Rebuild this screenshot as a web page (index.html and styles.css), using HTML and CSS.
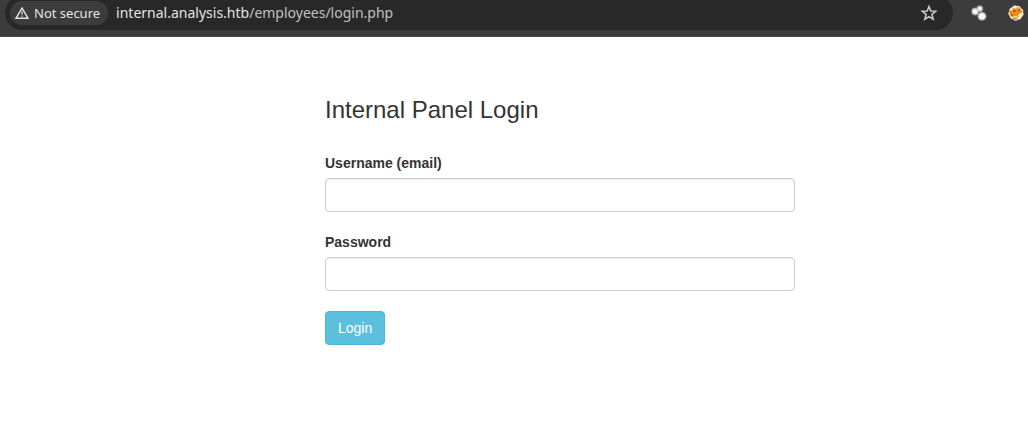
FILE: index.html
```html
<!DOCTYPE html>
<html lang="en">
<head>
<meta charset="utf-8">
<meta name="viewport" content="width=device-width, initial-scale=1">
<title>Internal Panel Login</title>
<link rel="stylesheet" href="styles.css">
</head>
<body>
<header class="toolbar">
  <div class="address-bar">
    <button class="security-chip" type="button">
      <svg width="14" height="12" viewBox="0 0 14 12" aria-hidden="true">
        <path d="M7 1.2 L13 11.2 H1 Z" fill="none" stroke="#e3e3e3" stroke-width="1.5"/>
        <path d="M7 4.5 V7.6 M7 8.4 V9.8" stroke="#e3e3e3" stroke-width="1.3"/>
      </svg>
      <span>Not secure</span>
    </button>
    <div class="url"><span class="url-host">internal.analysis.htb</span>/employees/login.php</div>
    <button class="icon-button" type="button" aria-label="Bookmark this page">
      <svg width="16" height="16" viewBox="0 0 16 16" aria-hidden="true">
        <path d="M8 1.5 L9.8 6 L14.7 6.3 L10.9 9.4 L12.2 14.2 L8 11.6 L3.8 14.2 L5.1 9.4 L1.3 6.3 L6.2 6 Z" fill="none" stroke="#c7c7c7" stroke-width="1.6"/>
      </svg>
    </button>
  </div>
  <div class="extensions">
    <button class="icon-button" type="button" aria-label="Extension">
      <svg width="16" height="16" viewBox="0 0 16 16" aria-hidden="true">
        <g fill="#8f8f8f"><circle cx="4.2" cy="6.5" r="4"/><circle cx="8.8" cy="3.7" r="3.4"/><circle cx="11" cy="11.3" r="4.6"/></g>
        <g fill="#c9c9c9"><circle cx="4.2" cy="6.5" r="3.2"/><circle cx="8.8" cy="3.7" r="2.6"/><circle cx="11" cy="11.3" r="3.8"/></g>
        <g fill="#fafafa"><circle cx="4.2" cy="6.5" r="2.2"/><circle cx="8.8" cy="3.7" r="1.7"/><circle cx="11" cy="11.3" r="2.8"/></g>
      </svg>
    </button>
    <button class="icon-button" type="button" aria-label="Proxy extension">
      <svg width="16" height="16" viewBox="0 0 16 16" aria-hidden="true">
        <circle cx="8" cy="8" r="7.2" fill="#eee3d0"/>
        <path d="M1 7 L2 5 L4 6 L5 3 L8 4 L10 2 L13 4 L14 7 L13 10 L10 12 L7 11 L4 12 L2 10 Z" fill="#f08d15"/>
        <path d="M4 13 L7 12.5 L10 13.5 L8 15 H6 Z" fill="#e98814"/>
        <path d="M5 7 L7 5.5 L8 7 M3 9.5 L5 10.5 M10 6 L12 5" fill="none" stroke="#8a4708" stroke-width="1"/>
        <path d="M10 10 L13 8 L14 10 L11 12 Z" fill="#fff"/>
        <circle cx="8" cy="8" r="7.1" fill="none" stroke="#f6eee0" stroke-width="1" stroke-dasharray="3 2"/>
      </svg>
    </button>
  </div>
</header>
<main class="page">
  <form class="login">
    <h1 class="title">Internal Panel Login</h1>
    <div class="field">
      <label class="label" for="username">Username (email)</label>
      <input class="input" id="username" name="username" type="text">
    </div>
    <div class="field">
      <label class="label" for="password">Password</label>
      <input class="input" id="password" name="password" type="password">
    </div>
    <button class="submit" type="submit">Login</button>
  </form>
</main>
</body>
</html>
```
FILE: styles.css
```css
* {
  box-sizing: border-box;
}

body {
  margin: 0;
  background: #fff;
  color: #333;
  font: 14px/20px "Liberation Sans", Arial, sans-serif;
}

button {
  border: 0;
  font: inherit;
  cursor: pointer;
}

.toolbar {
  display: flex;
  align-items: flex-start;
  gap: 18px;
  height: 37px;
  padding: 0 4px 0 5px;
  overflow: hidden;
  background: #3c3c3c;
  border-bottom: 1px solid #484848;
}

.address-bar {
  display: flex;
  flex: 1;
  align-items: center;
  gap: 8px;
  height: 34px;
  margin-top: -4px;
  padding: 0 16px 0 5px;
  background: #282828;
  border-radius: 17px;
}

.security-chip {
  display: flex;
  align-items: center;
  gap: 5px;
  height: 24px;
  padding: 0 8px 0 5px;
  border-radius: 12px;
  background: #3c3c3c;
  color: #e3e3e3;
  font: 400 13px/20px "Noto Sans", sans-serif;
  white-space: nowrap;
}

.url {
  flex: 1;
  color: #c0c0c0;
  font: 14px/20px "Noto Sans", sans-serif;
}

.url-host {
  color: #e3e3e3;
}

.icon-button {
  display: flex;
  padding: 0;
  background: none;
}

.extensions {
  display: flex;
  gap: 21px;
  padding-top: 5px;
}

.page {
  display: grid;
  grid-template-columns: 325fr minmax(240px, 470px) 233fr;
  padding: 60px 0;
}

.login {
  grid-column: 2;
}

.title {
  margin: 0 0 30px;
  font-size: 24px;
  font-weight: 400;
  line-height: 26px;
}

.field {
  margin-bottom: 20px;
}

.label {
  display: block;
  margin-bottom: 5px;
  font-weight: 700;
}

.input {
  display: block;
  width: 100%;
  height: 34px;
  padding: 6px 12px;
  border: 1px solid #ccc;
  border-radius: 4px;
  background: #fff;
  box-shadow: inset 0 1px 1px rgba(0, 0, 0, 0.075);
  color: #555;
  font: inherit;
}

.submit {
  padding: 6px 12px;
  border: 1px solid #46b8da;
  border-radius: 4px;
  background: #5bc0de;
  color: #fff;
}
```
